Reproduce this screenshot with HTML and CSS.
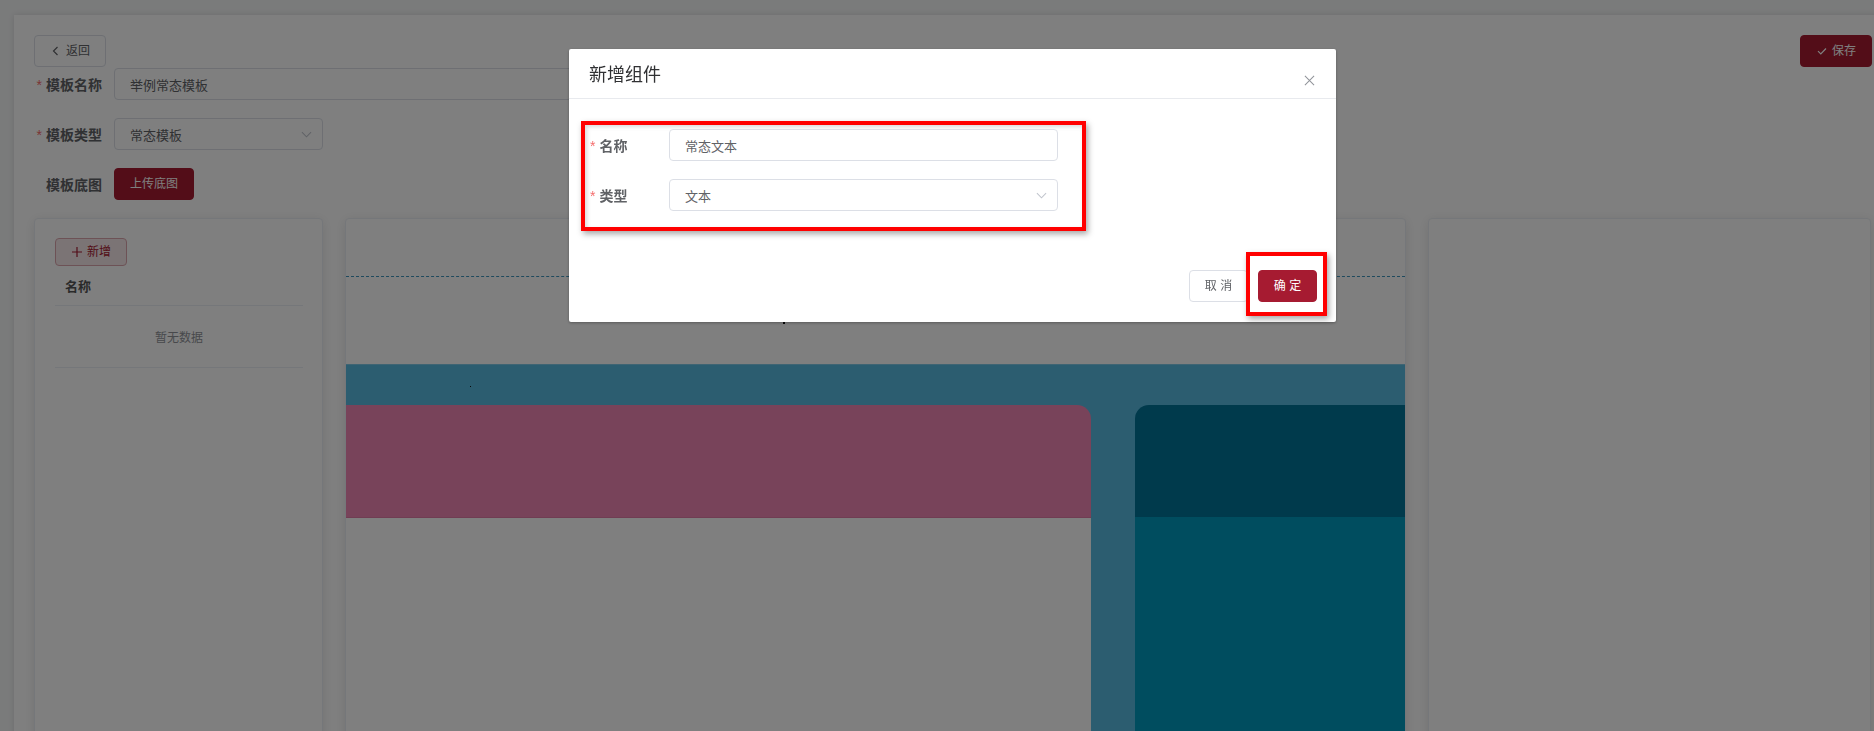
FILE: index.html
```html
<!DOCTYPE html>
<html lang="zh-CN">
<head>
<meta charset="UTF-8">
<meta name="viewport" content="width=device-width, initial-scale=1.0">
<title>模板编辑</title>
<link rel="stylesheet" href="styles.css">
</head>
<body>
<div class="page">
    <div class="toolbar">
        <button class="btn btn-default"><svg class="ico" viewBox="0 0 12 12"><path d="M7.5 2 3.5 6l4 4"/></svg><span>返回</span></button>
        <button class="btn btn-primary"><svg class="ico" viewBox="0 0 12 12"><path d="M2 6.2 4.8 9 10 3.5"/></svg><span>保存</span></button>
    </div>

    <div class="form-item">
        <label class="form-label"><i>*</i>模板名称</label>
        <div class="input input-name">举例常态模板</div>
    </div>
    <div class="form-item">
        <label class="form-label"><i>*</i>模板类型</label>
        <div class="input input-select">常态模板
            <svg class="arrow" viewBox="0 0 12 12"><path d="M1 3.5 6 8.5 11 3.5"/></svg>
        </div>
    </div>
    <div class="form-item">
        <label class="form-label">模板底图</label>
        <button class="btn btn-primary"><span>上传底图</span></button>
    </div>

    <div class="panels">
        <div class="panel panel-list">
            <button class="btn btn-plain"><svg class="ico" viewBox="0 0 12 12"><path d="M6 1v10M1 6h10"/></svg><span>新增</span></button>
            <table class="table">
                <thead><tr><th>名称</th></tr></thead>
                <tbody><tr><td class="empty">暂无数据</td></tr></tbody>
            </table>
        </div>

        <div class="panel panel-stage">
            <div class="stage-head"></div>
            <div class="stage-gap"><span class="dot dot-a"></span></div>
            <div class="stage-canvas">
                <span class="dot dot-b"></span>
                <div class="zone zone-left">
                    <div class="zone-head"></div>
                    <div class="zone-body"></div>
                </div>
                <div class="zone zone-right">
                    <div class="zone-head"></div>
                    <div class="zone-body"></div>
                </div>
            </div>
        </div>

        <div class="panel panel-props"></div>
    </div>
</div>

<!-- 新增组件弹窗 -->
<div class="mask"></div>
<div class="dialog">
    <div class="dialog-header">
        <span class="dialog-title">新增组件</span>
        <svg class="dialog-close" viewBox="0 0 12 12"><path d="M1 1l10 10M11 1 1 11"/></svg>
    </div>
    <div class="dialog-body">
        <div class="form-box">
            <div class="form-item">
                <label class="form-label"><i>*</i>名称</label>
                <div class="input">常态文本</div>
            </div>
            <div class="form-item">
                <label class="form-label"><i>*</i>类型</label>
                <div class="input input-select">文本
                    <svg class="arrow" viewBox="0 0 12 12"><path d="M1 3.5 6 8.5 11 3.5"/></svg>
                </div>
            </div>
        </div>
    </div>
    <div class="dialog-footer">
        <button class="btn btn-default"><span>取 消</span></button>
        <button class="btn btn-primary btn-confirm"><span>确 定</span><span class="ring"></span></button>
    </div>
</div>
</body>
</html>
```

FILE: styles.css
```css
html, body {
    margin: 0;
    height: 100%;
    overflow: hidden;
}
body {
    font-family: "Liberation Sans", "Noto Sans CJK SC", sans-serif;
    background-color: #f5f6f7;
    color: #606266;
    font-size: 13px;
}
.page {
    position: relative;
    margin: 15px 0 0 14px;
    padding: 20px 20px 0 20px;
    width: 1838px;
    height: 760px;
    background: #fff;
    box-shadow: 0 0 6px rgba(0, 0, 0, 0.12);
}

/* buttons */
.btn {
    display: inline-flex;
    align-items: center;
    justify-content: center;
    gap: 4px;
    height: 32px;
    padding: 0 15px;
    border: 1px solid #dcdfe6;
    border-radius: 4px;
    background: #fff;
    color: #606266;
    font-family: inherit;
    font-size: 12px;
    line-height: 1;
    white-space: nowrap;
    cursor: pointer;
    box-sizing: border-box;
}
.btn-primary {
    background: #a61b31;
    border-color: #a61b31;
    color: #fff;
}
.btn-plain {
    height: 28px;
    background: #f6e8ea;
    border-color: #dba4ad;
    color: #a61b31;
}
.ico {
    width: 12px;
    height: 12px;
    fill: none;
    stroke: currentColor;
    stroke-width: 1.2;
}

.toolbar {
    display: flex;
    justify-content: space-between;
    margin-bottom: 1px;
}

/* form */
.form-item {
    display: flex;
    align-items: center;
    height: 32px;
    margin-bottom: 18px;
}
.form-label {
    width: 80px;
    padding-right: 12px;
    box-sizing: border-box;
    text-align: right;
    font-size: 14px;
    font-weight: bold;
    color: #606266;
}
.form-label i {
    font-style: normal;
    font-weight: normal;
    color: #f56c6c;
    margin-right: 4px;
}
.input {
    position: relative;
    display: flex;
    align-items: center;
    height: 32px;
    padding: 0 15px;
    border: 1px solid #dcdfe6;
    border-radius: 4px;
    box-sizing: border-box;
    font-size: 13px;
    color: #606266;
    background: #fff;
}
.input-name {
    width: 600px;
}
.input-select {
    width: 209px;
}
.arrow {
    position: absolute;
    right: 10px;
    top: 10px;
    width: 11px;
    height: 11px;
    fill: none;
    stroke: #c0c4cc;
    stroke-width: 1.1;
}

/* three columns */
.panels {
    display: flex;
    gap: 22px;
    margin-top: 1px;
}
.panel {
    position: relative;
    height: 540px;
    background: #fff;
    border: 1px solid #ebeef5;
    border-radius: 4px;
    box-shadow: 0 2px 12px rgba(0, 0, 0, 0.1);
    box-sizing: border-box;
    overflow: hidden;
}
.panel-list {
    width: 289px;
    padding: 19px 19px 0 20px;
}
.panel-stage {
    width: 1061px;
}
.panel-props {
    width: 443px;
}

.table {
    width: 100%;
    border-collapse: collapse;
}
.table th {
    height: 39px;
    padding: 0 10px;
    text-align: left;
    font-size: 13px;
    font-weight: bold;
    color: #555;
    border-bottom: 1px solid #ebeef5;
}
.table td.empty {
    height: 59px;
    text-align: center;
    font-size: 12px;
    color: #909399;
    border-bottom: 1px solid #ebeef5;
}

/* stage */
.stage-head {
    height: 57px;
    border-bottom: 1px dashed #3f95bd;
}
.stage-gap {
    position: relative;
    height: 87px;
}
.stage-canvas {
    position: relative;
    display: flex;
    gap: 44px;
    height: 400px;
    padding-top: 40px;
    background: #58bae0;
    border-top: 1px solid #7ec9e6;
}
.dot {
    position: absolute;
    width: 2px;
    height: 2px;
    background: #111;
}
.dot-a {
    left: 437px;
    top: 45px;
}
.dot-b {
    left: 124px;
    top: 21px;
    width: 1px;
    height: 1px;
}
.zone {
    display: flex;
    flex-direction: column;
}
.zone-left {
    width: 745px;
}
.zone-right {
    flex: 1;
}
.zone-head {
    height: 112px;
}
.zone-body {
    flex: 1;
}
.zone-left .zone-head {
    background: #f086b4;
    border-top-right-radius: 14px;
    border-bottom: 1px solid #e07aa6;
}
.zone-left .zone-body {
    background: #fff;
}
.zone-right .zone-head {
    background: #007498;
    border-top-left-radius: 14px;
}
.zone-right .zone-body {
    background: #009abe;
}

/* dialog */
.mask {
    position: fixed;
    inset: 0;
    background: rgba(0, 0, 0, 0.5);
}
.dialog {
    position: fixed;
    top: 49px;
    left: 569px;
    width: 767px;
    background: #fff;
    border-radius: 2px;
    box-shadow: 0 1px 3px rgba(0, 0, 0, 0.3);
}
.dialog-header {
    position: relative;
    padding: 14px 20px 9px;
    border-bottom: 1px solid #e8eaee;
    line-height: 24px;
}
.dialog-title {
    font-size: 18px;
    color: #303133;
}
.dialog-close {
    position: absolute;
    right: 21px;
    top: 26px;
    width: 11px;
    height: 11px;
    fill: none;
    stroke: #909399;
    stroke-width: 1.1;
}
.dialog-body {
    padding: 22px 12px 29px;
}
.form-box {
    width: fit-content;
    padding: 4px 24px 16px 4px;
    border: 4px solid #f00;
    box-shadow: 2px 3px 6px rgba(0, 0, 0, 0.35), inset 2px 2px 4px rgba(0, 0, 0, 0.15);
}
.form-box .form-item:last-child {
    margin-bottom: 0;
}
.form-box .form-label {
    text-align: left;
    padding: 0 0 0 1px;
}
.form-box .input {
    width: 389px;
}
.dialog-footer {
    display: flex;
    justify-content: flex-end;
    gap: 10px;
    padding: 10px 19px 20px;
}
.dialog-footer .btn {
    width: 59px;
    padding: 0;
}
.btn-confirm {
    position: relative;
}
.ring {
    position: absolute;
    top: -19px;
    bottom: -15px;
    left: -13px;
    right: -11px;
    border: 4px solid #f00;
    box-shadow: 2px 3px 6px rgba(0, 0, 0, 0.35);
}
```
